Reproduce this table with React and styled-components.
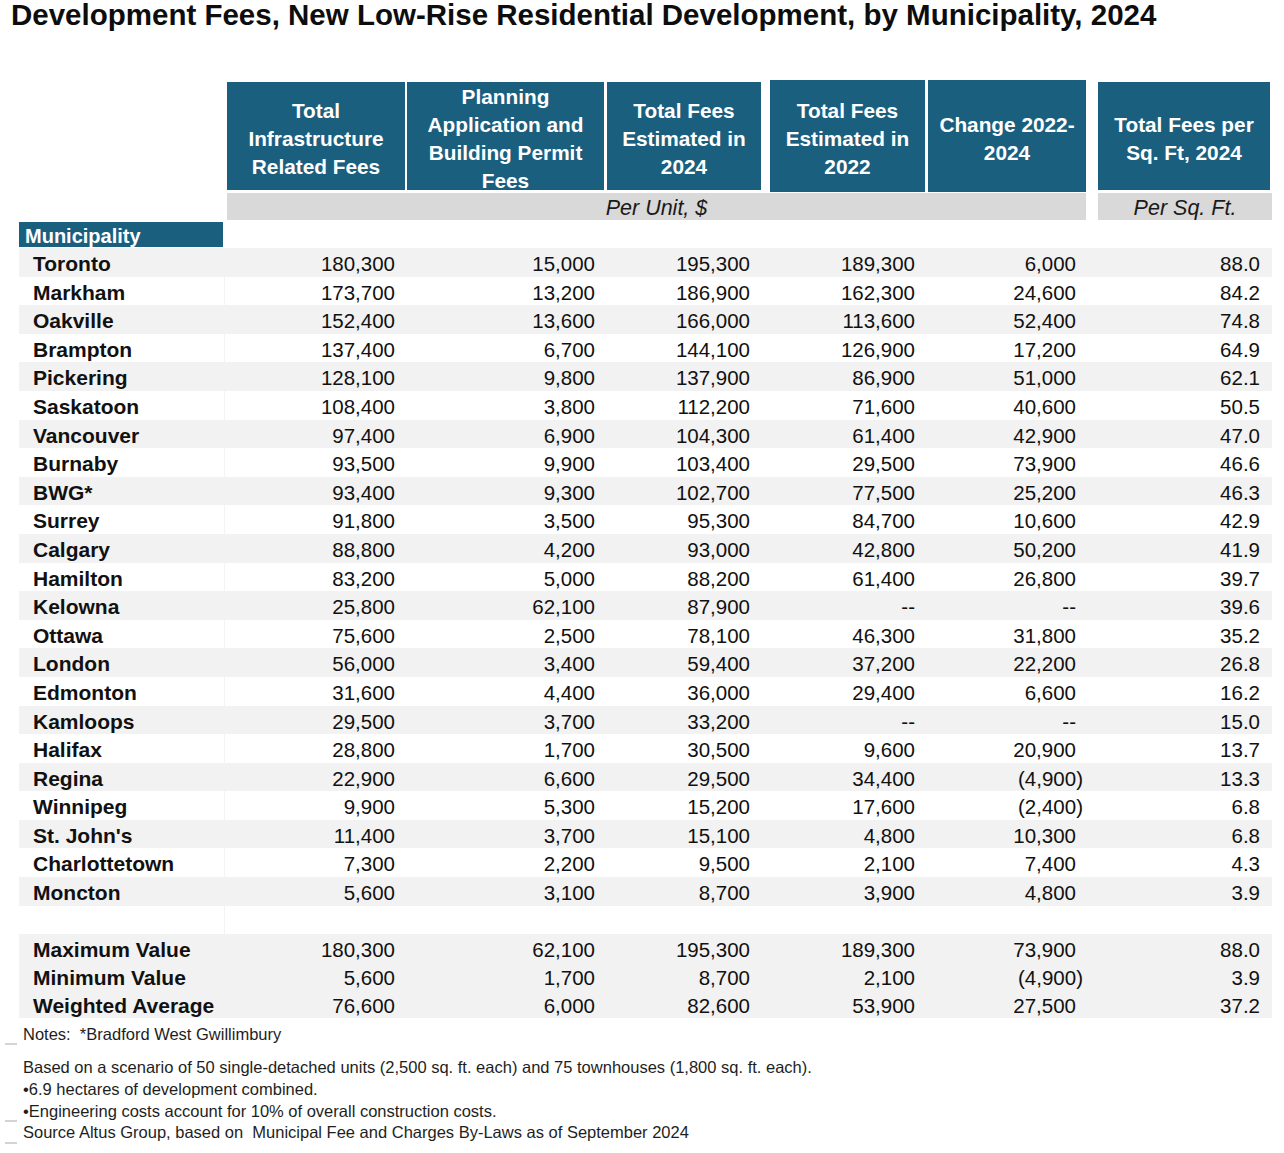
import styled, { createGlobalStyle } from "styled-components"

const GlobalStyle = createGlobalStyle`
  body {
    margin: 0;
    background: #ffffff;
    font-family: "Liberation Sans", Arial, sans-serif;
    color: #111111;
  }
`

const BLUE = "#1b5f7f"

const rows = [
  ["Toronto", "180,300", "15,000", "195,300", "189,300", "6,000", "88.0"],
  ["Markham", "173,700", "13,200", "186,900", "162,300", "24,600", "84.2"],
  ["Oakville", "152,400", "13,600", "166,000", "113,600", "52,400", "74.8"],
  ["Brampton", "137,400", "6,700", "144,100", "126,900", "17,200", "64.9"],
  ["Pickering", "128,100", "9,800", "137,900", "86,900", "51,000", "62.1"],
  ["Saskatoon", "108,400", "3,800", "112,200", "71,600", "40,600", "50.5"],
  ["Vancouver", "97,400", "6,900", "104,300", "61,400", "42,900", "47.0"],
  ["Burnaby", "93,500", "9,900", "103,400", "29,500", "73,900", "46.6"],
  ["BWG*", "93,400", "9,300", "102,700", "77,500", "25,200", "46.3"],
  ["Surrey", "91,800", "3,500", "95,300", "84,700", "10,600", "42.9"],
  ["Calgary", "88,800", "4,200", "93,000", "42,800", "50,200", "41.9"],
  ["Hamilton", "83,200", "5,000", "88,200", "61,400", "26,800", "39.7"],
  ["Kelowna", "25,800", "62,100", "87,900", "--", "--", "39.6"],
  ["Ottawa", "75,600", "2,500", "78,100", "46,300", "31,800", "35.2"],
  ["London", "56,000", "3,400", "59,400", "37,200", "22,200", "26.8"],
  ["Edmonton", "31,600", "4,400", "36,000", "29,400", "6,600", "16.2"],
  ["Kamloops", "29,500", "3,700", "33,200", "--", "--", "15.0"],
  ["Halifax", "28,800", "1,700", "30,500", "9,600", "20,900", "13.7"],
  ["Regina", "22,900", "6,600", "29,500", "34,400", "(4,900)", "13.3"],
  ["Winnipeg", "9,900", "5,300", "15,200", "17,600", "(2,400)", "6.8"],
  ["St. John's", "11,400", "3,700", "15,100", "4,800", "10,300", "6.8"],
  ["Charlottetown", "7,300", "2,200", "9,500", "2,100", "7,400", "4.3"],
  ["Moncton", "5,600", "3,100", "8,700", "3,900", "4,800", "3.9"],
]

const summary = [
  ["Maximum Value", "180,300", "62,100", "195,300", "189,300", "73,900", "88.0"],
  ["Minimum Value", "5,600", "1,700", "8,700", "2,100", "(4,900)", "3.9"],
  ["Weighted Average", "76,600", "6,000", "82,600", "53,900", "27,500", "37.2"],
]

const headers = [
  { lines: ["Total", "Infrastructure", "Related Fees"], width: 178, gap: 0, tall: false },
  { lines: ["Planning", "Application and", "Building Permit", "Fees"], width: 197, gap: 2, tall: false },
  { lines: ["Total Fees", "Estimated in", "2024"], width: 154, gap: 3, tall: false },
  { lines: ["Total Fees", "Estimated in", "2022"], width: 155, gap: 9, tall: true },
  { lines: ["Change 2022-", "2024"], width: 158, gap: 3, tall: true },
  { lines: ["Total Fees per", "Sq. Ft, 2024"], width: 172, gap: 12, tall: false },
]

// right padding per numeric column so the figures line up like the sheet
const padRight = [11, 10, 15, 12, 16, 12]

const NumberCell = ({ value, col }) => {
  const negative = value.startsWith("(")
  return (
    <Num $pad={padRight[col]} $neg={col === 4 && negative}>
      {value}
    </Num>
  )
}

const DataRow = ({ cells, striped, summaryRow }) => (
  <Row $striped={striped} $summary={summaryRow}>
    <Name $divider={!striped}>{cells[0]}</Name>
    {cells.slice(1).map((v, i) => (
      <NumberCell key={i} value={v} col={i} />
    ))}
  </Row>
)

const App = () => {
  return (
    <Page>
      <GlobalStyle />
      <Title>Development Fees, New Low-Rise Residential Development, by Municipality, 2024</Title>

      <HeaderRow>
        {headers.map((h, i) => (
          <HeadCell key={i} $width={h.width} $gap={h.gap} $tall={h.tall}>
            <span>
              {h.lines.map((l, j) => (
                <HeadLine key={j}>{l}</HeadLine>
              ))}
            </span>
          </HeadCell>
        ))}
      </HeaderRow>

      <UnitsRow>
        <UnitBand $width={859}>Per Unit, $</UnitBand>
        <UnitBand $width={174} $gap={12}>Per Sq. Ft.</UnitBand>
      </UnitsRow>

      <MuniLabel>Municipality</MuniLabel>

      <Table>
        {rows.map((r, i) => (
          <DataRow key={r[0]} cells={r} striped={i % 2 === 0} />
        ))}
        <SpacerRow>
          <Name $divider />
        </SpacerRow>
        {summary.map((r) => (
          <DataRow key={r[0]} cells={r} striped summaryRow />
        ))}
      </Table>

      <Notes>
        <NoteLine $tick>
          <Gutter />
          <NoteText>Notes:  *Bradford West Gwillimbury</NoteText>
        </NoteLine>
        <NoteBlock>
          <NoteLine>
            <Gutter />
            <NoteText>Based on a scenario of 50 single-detached units (2,500 sq. ft. each) and 75 townhouses (1,800 sq. ft. each).</NoteText>
          </NoteLine>
          <NoteLine>
            <Gutter />
            <NoteText>•6.9 hectares of development combined.</NoteText>
          </NoteLine>
          <NoteLine $tick>
            <Gutter />
            <NoteText>•Engineering costs account for 10% of overall construction costs.</NoteText>
          </NoteLine>
          <NoteLine $tick>
            <Gutter />
            <NoteText>Source Altus Group, based on  Municipal Fee and Charges By-Laws as of September 2024</NoteText>
          </NoteLine>
        </NoteBlock>
      </Notes>
    </Page>
  )
}

const Page = styled.div`
  width: 1284px;
  min-height: 1153px;
  background: #ffffff;
`

const Title = styled.h1`
  margin: 0;
  padding-left: 11px;
  font-size: 29.5px;
  line-height: 30px;
  font-weight: 700;
  color: #0d0d0d;
  white-space: nowrap;
`

const HeaderRow = styled.div`
  display: flex;
  align-items: center;
  height: 112px;
  margin-top: 50px;
  padding-left: 227px;
`

const HeadCell = styled.div`
  width: ${(p) => p.$width}px;
  height: ${(p) => (p.$tall ? 112 : 108)}px;
  margin-left: ${(p) => p.$gap}px;
  background: ${BLUE};
  color: #ffffff;
  display: flex;
  align-items: center;
  justify-content: center;
  text-align: center;
  padding-top: 5px;
  box-sizing: border-box;
  overflow: visible;
  font-size: 20.8px;
  font-weight: 700;
  line-height: 28px;
`

const HeadLine = styled.span`
  display: block;
  white-space: nowrap;
`

const UnitsRow = styled.div`
  display: flex;
  margin-top: 1px;
  padding-left: 227px;
`

const UnitBand = styled.div`
  width: ${(p) => p.$width}px;
  margin-left: ${(p) => p.$gap || 0}px;
  height: 27px;
  background: #d9d9d9;
  font-style: italic;
  font-size: 21.5px;
  line-height: 30px;
  text-align: center;
  color: #1a1a1a;
`

const MuniLabel = styled.div`
  margin: 2px 0 0 19px;
  width: 204px;
  height: 25px;
  box-sizing: border-box;
  padding-left: 6px;
  background: ${BLUE};
  color: #ffffff;
  font-size: 20px;
  font-weight: 700;
  line-height: 29px;
  overflow: hidden;
`

const Table = styled.div`
  margin: 1px 0 0 19px;
  width: 1253px;
`

const Row = styled.div`
  display: grid;
  grid-template-columns: 206px 181px 199px 160px 162px 165px 180px;
  height: ${(p) => (p.$summary ? 28 : 28.6)}px;
  line-height: ${(p) => (p.$summary ? 28 : 28.6)}px;
  background: ${(p) => (p.$striped ? "#f2f2f2" : "#ffffff")};
  font-size: 20.5px;
  color: #111111;
`

const SpacerRow = styled(Row)`
  height: 28px;
  background: #ffffff;
`

const Name = styled.div`
  padding-left: 14px;
  padding-top: 2px;
  font-size: 21px;
  font-weight: 700;
  white-space: nowrap;
  border-right: 1px solid ${(p) => (p.$divider ? "#f3f3f3" : "transparent")};
`

const Num = styled.div`
  text-align: right;
  padding-top: 2px;
  padding-right: ${(p) => p.$pad - (p.$neg ? 7 : 0)}px;
  white-space: nowrap;
`

const Notes = styled.div`
  margin-top: 6px;
  padding-left: 5px;
  font-size: 16.5px;
  color: #1e1e1e;
`

const NoteBlock = styled.div`
  margin-top: 12px;
`

const NoteLine = styled.div`
  display: flex;
  align-items: flex-end;
  height: 21.7px;
  line-height: 21.7px;

  & > div:first-child {
    border-bottom-color: ${(p) => (p.$tick ? "#d4d4d4" : "transparent")};
  }
`

const Gutter = styled.div`
  width: 12px;
  height: 0;
  margin-right: 6px;
  border-bottom: 2px solid transparent;
`

const NoteText = styled.span`
  white-space: pre;
`

export default App
